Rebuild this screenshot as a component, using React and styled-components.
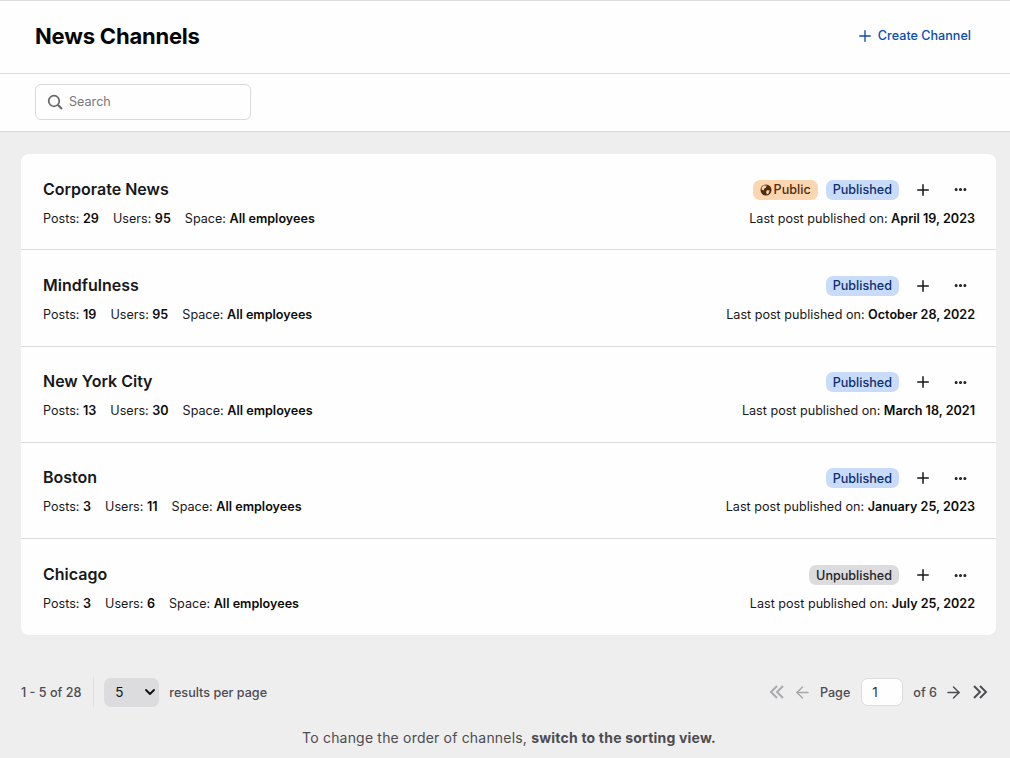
import React from 'react'
import styled, { createGlobalStyle } from 'styled-components'
import { Plus, Ellipsis, ArrowLeft, ArrowRight, ChevronDown } from 'lucide-react'

const channels = [
  { name: 'Corporate News', posts: 29, users: 95, last: 'April 19, 2023', isPublic: true, status: 'Published' },
  { name: 'Mindfulness', posts: 19, users: 95, last: 'October 28, 2022', status: 'Published' },
  { name: 'New York City', posts: 13, users: 30, last: 'March 18, 2021', status: 'Published' },
  { name: 'Boston', posts: 3, users: 11, last: 'January 25, 2023', status: 'Published' },
  { name: 'Chicago', posts: 3, users: 6, last: 'July 25, 2022', status: 'Unpublished' },
]

const GlobalStyle = createGlobalStyle`
  html, body {
    margin: 0;
    padding: 0;
    background: #eeeeef;
    font-family: Inter, 'Liberation Sans', sans-serif;
    color: #111;
  }
  * {
    box-sizing: border-box;
  }
`

const Page = styled.div`
  width: 1010px;
  height: 758px;
  overflow: hidden;
`

const Header = styled.header`
  height: 74px;
  background: #fefefe;
  border-top: 1px solid #dcdcdc;
  border-bottom: 1px solid #dcdcdc;
  display: flex;
  align-items: center;
  justify-content: space-between;
  padding: 0 39px 3px 35px;
`

const Title = styled.h1`
  margin: 0;
  font-size: 22px;
  font-weight: 700;
  letter-spacing: -0.2px;
  color: #050505;
`

const CreateButton = styled.button`
  display: flex;
  align-items: center;
  gap: 4px;
  padding: 0;
  border: 0;
  background: none;
  font: inherit;
  font-size: 12.6px;
  font-weight: 500;
  color: #0b4cb0;

  svg {
    margin-top: 1px;
  }
`

const SearchBar = styled.div`
  height: 58px;
  background: #fefefe;
  border-bottom: 1px solid #d8d8d8;
  padding: 10px 35px 0;
`

const SearchBox = styled.div`
  width: 216px;
  height: 36px;
  display: flex;
  align-items: center;
  gap: 6px;
  padding: 0 0 1px 11px;
  border: 1px solid #d9d9db;
  border-radius: 6px;
  font-size: 12.6px;
  color: #77777a;
`

const Card = styled.section`
  margin: 22px 14px 0 21px;
  height: 481.25px;
  background: #fefefe;
  border-radius: 8px;
  display: grid;
  grid-template-rows: repeat(5, 1fr);
`

const Row = styled.article`
  display: flex;
  flex-direction: column;
  justify-content: center;
  gap: 9px;
  padding: 1px 21px 0 22px;
  border-bottom: 1px solid #dcdcdc;

  &:last-child {
    border-bottom: 0;
  }
`

const Line = styled.div`
  display: flex;
  align-items: center;
  justify-content: space-between;
`

const Name = styled.h2`
  margin: 0;
  font-size: 16px;
  line-height: 24px;
  font-weight: 600;
  color: #18181a;
`

const Actions = styled.div`
  display: flex;
  align-items: center;
  gap: 8px;
  height: 24px;
  padding: 2px 3px 0 0;
`

const Badge = styled.span`
  display: flex;
  align-items: center;
  gap: 2px;
  height: 20px;
  padding: 0 7px;
  border-radius: 7px;
  font-size: 12.6px;
  font-weight: 500;
  background: ${p => (p.$kind === 'Public' ? '#fbd6b0' : p.$kind === 'Published' ? '#c8dcfa' : '#dcdcde')};
  color: ${p => (p.$kind === 'Public' ? '#4d2c10' : p.$kind === 'Published' ? '#0c2f6e' : '#232325')};
`

const IconButton = styled.button`
  width: 24px;
  height: 24px;
  margin-left: ${p => p.$gap || 0}px;
  display: flex;
  align-items: center;
  justify-content: center;
  padding: 0;
  border: 0;
  background: none;
  color: #18181a;
`

const Stats = styled.div`
  display: flex;
  gap: 14px;
  font-size: 12.6px;
  line-height: 18px;
  color: #18181a;

  b {
    font-weight: 600;
    color: #0b0b0b;
  }
`

const Pagination = styled.footer`
  margin: 42px 21px 0;
  height: 30px;
  display: flex;
  align-items: center;
  justify-content: space-between;
  font-size: 12.6px;
  font-weight: 500;
  color: #4c4c50;
`

const Group = styled.div`
  display: flex;
  align-items: center;
`

const Divider = styled.span`
  width: 1px;
  height: 30px;
  margin: 0 10px 0 12px;
  background: #dfdfe0;
`

const PerPage = styled.div`
  width: 55px;
  height: 29px;
  display: flex;
  align-items: center;
  justify-content: space-between;
  padding: 0 1px 0 11px;
  margin-right: 10px;
  border-radius: 7px;
  background: #dcdcde;
  font-size: 13.5px;
  font-weight: 400;
  color: #111;
`

const PageInput = styled.div`
  width: 42px;
  height: 28px;
  margin: 0 10px 0 11px;
  display: flex;
  align-items: center;
  padding-left: 10px;
  background: #fefefe;
  border: 1px solid #dcdcde;
  border-radius: 7px;
  font-size: 13.5px;
  font-weight: 400;
  color: #333;
`

const PageArrow = styled.span`
  display: flex;
  margin: ${p => p.$margin || '0'};
  color: ${p => (p.$off ? '#a8a8ab' : '#4c4c50')};
`

const Hint = styled.p`
  margin: 21px 0 0;
  padding-left: 8px;
  text-align: center;
  font-size: 14px;
  line-height: 20px;
  letter-spacing: 0.19px;
  color: #4c4c50;

  b {
    font-weight: 700;
    letter-spacing: 0.2px;
  }
`

const SearchGlyph = () => (
  <svg width='16' height='16' viewBox='0 0 16 16' fill='none' stroke='#666' strokeWidth='1.7'>
    <circle cx='7' cy='7' r='5.3' />
    <path d='M11 11l4 4' strokeWidth='2.1' />
  </svg>
)

const GlobeGlyph = () => (
  <svg width='12' height='12' viewBox='0 0 12 12'>
    <circle cx='6' cy='6' r='5.5' fill='currentColor' />
    <path d='M3.5 1.6L6.6 1.4 6 3.4 4.3 4.6 3.6 6.6 1.6 5.4 1.8 3.2z' fill='#fbd6b0' />
    <path d='M6.8 6.2L9.6 6.6 8.6 9.6 6.8 10.4 6.2 8z' fill='#fbd6b0' />
  </svg>
)

const DoubleChevron = ({ right }) => (
  <svg width='16' height='16' viewBox='0 0 16 16' fill='none' stroke='currentColor' strokeWidth='1.9'>
    <path d={right ? 'M2 2l6 6-6 6M8 2l6 6-6 6' : 'M14 2L8 8l6 6M8 2L2 8l6 6'} />
  </svg>
)

const App = () => {
  return (
    <Page>
      <GlobalStyle />
      <Header>
        <Title>News Channels</Title>
        <CreateButton>
          <Plus size={18} strokeWidth={1.8} />
          Create Channel
        </CreateButton>
      </Header>
      <SearchBar>
        <SearchBox>
          <SearchGlyph />
          Search
        </SearchBox>
      </SearchBar>
      <Card>
        {channels.map(c => (
          <Row key={c.name}>
            <Line>
              <Name>{c.name}</Name>
              <Actions>
                {c.isPublic && (
                  <Badge $kind='Public'>
                    <GlobeGlyph />
                    Public
                  </Badge>
                )}
                <Badge $kind={c.status}>{c.status}</Badge>
                <IconButton $gap={4}>
                  <Plus size={18} strokeWidth={2} />
                </IconButton>
                <IconButton $gap={5}>
                  <Ellipsis size={15} strokeWidth={2.8} />
                </IconButton>
              </Actions>
            </Line>
            <Line>
              <Stats>
                <span>Posts: <b>{c.posts}</b></span>
                <span>Users: <b>{c.users}</b></span>
                <span>Space: <b>All employees</b></span>
              </Stats>
              <Stats>
                <span>Last post published on: <b>{c.last}</b></span>
              </Stats>
            </Line>
          </Row>
        ))}
      </Card>
      <Pagination>
        <Group>
          1 - 5 of 28
          <Divider />
          <PerPage>
            5
            <ChevronDown size={16} strokeWidth={2.8} />
          </PerPage>
          results per page
        </Group>
        <Group>
          <PageArrow $off $margin='0 8px 0 0'><DoubleChevron /></PageArrow>
          <PageArrow $off $margin='0 8px 0 0'><ArrowLeft size={19} strokeWidth={1.8} /></PageArrow>
          Page
          <PageInput>1</PageInput>
          of 6
          <PageArrow $margin='0 9px 0 7px'><ArrowRight size={19} strokeWidth={1.8} /></PageArrow>
          <PageArrow $margin='0 1px 0 0'><DoubleChevron right /></PageArrow>
        </Group>
      </Pagination>
      <Hint>
        To change the order of channels, <b>switch to the sorting view.</b>
      </Hint>
    </Page>
  )
}

export default App
